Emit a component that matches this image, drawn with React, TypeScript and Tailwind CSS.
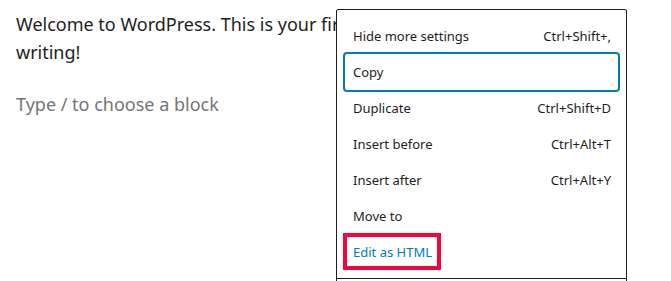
import React from 'react';

type Item = {
  label: string;
  shortcut?: string;
  focused?: boolean;
  highlighted?: boolean;
};

const items: Item[] = [
  { label: 'Hide more settings', shortcut: 'Ctrl+Shift+,' },
  { label: 'Copy', focused: true },
  { label: 'Duplicate', shortcut: 'Ctrl+Shift+D' },
  { label: 'Insert before', shortcut: 'Ctrl+Alt+T' },
  { label: 'Insert after', shortcut: 'Ctrl+Alt+Y' },
  { label: 'Move to' },
  { label: 'Edit as HTML', highlighted: true },
];

const MenuItem: React.FC<{ item: Item }> = ({ item }) => (
  <div
    className={`relative flex h-9 items-center justify-between rounded-[2px] pl-2 pr-[7px] pt-[2px] ${
      item.focused ? 'ring-2 ring-[#007cba]' : ''
    } ${item.highlighted ? 'text-[#007cba]' : 'text-[#1e1e1e]'}`}
  >
    <span>{item.label}</span>
    {item.shortcut && <span>{item.shortcut}</span>}
    {item.highlighted && (
      <span className="pointer-events-none absolute left-[-2px] top-[-1px] h-[37px] w-[98px] border-4 border-[#f5053a]" />
    )}
  </div>
);

export default function App() {
  return (
    <div
      className="relative h-[281px] w-[671px] overflow-hidden bg-white"
      style={{ fontFamily: '"Noto Sans", "Open Sans", sans-serif' }}
    >
      {/* Editor content, first line runs under the dropdown */}
      <div className="pl-4 pt-[10px] text-[18px] leading-[28px] text-[#1e1e1e]">
        <p className="w-[320px] overflow-hidden whitespace-nowrap">
          Welcome to WordPress. This is your first post. Edit or delete it, then start
          <br />
          writing!
        </p>
        <p className="mt-6 text-[#757575]">Type / to choose a block</p>
      </div>

      {/* Block settings dropdown */}
      <div className="absolute left-[336px] top-[9px] w-[291px] rounded-t-[2px] border border-[#1e1e1e] bg-white text-[13px]">
        <div className="p-2">
          {items.map((item) => (
            <MenuItem key={item.label} item={item} />
          ))}
        </div>
        <div className="border-t border-[#1e1e1e] p-2">
          <div className="h-9" />
        </div>
      </div>
    </div>
  );
}
